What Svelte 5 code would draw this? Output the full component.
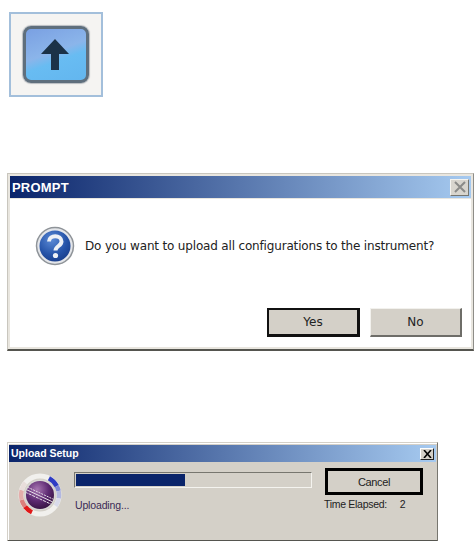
<script>
  const elapsed = 2;

  // ring segments of the spinner logo, angles clockwise from 12 o'clock
  const segments = [
    { from: 28, to: 62, color: '#2f3cc4' },
    { from: 62, to: 78, color: '#7f88d4' },
    { from: 78, to: 100, color: '#b3b8e0' },
    { from: 100, to: 125, color: '#d9dbea' },
    { from: 205, to: 232, color: '#e01818' },
    { from: 232, to: 255, color: '#dc7f7c' },
    { from: 255, to: 285, color: '#e3aeab' },
    { from: 285, to: 310, color: '#e8dedb' }
  ];

  function arc(from, to) {
    const r = 19;
    const pt = (a) => {
      const t = (a * Math.PI) / 180;
      return `${(23 + r * Math.sin(t)).toFixed(2)} ${(23 - r * Math.cos(t)).toFixed(2)}`;
    };
    return `M${pt(from)} A${r} ${r} 0 0 1 ${pt(to)}`;
  }
</script>

<div class="page">
  <div class="toolbar-shot">
    <div class="up-button">
      <svg width="30" height="32" viewBox="0 0 30 32">
        <path d="M15 0 L29 15 L19 15 L19 31 L11 31 L11 15 L1 15 Z" fill="#1b3247" />
      </svg>
    </div>
  </div>

  <div class="prompt">
    <div class="titlebar big">
      <span>PROMPT</span>
      <div class="close-soft">
        <svg width="14" height="12" viewBox="0 0 14 12">
          <path d="M2 1 L12 11 M12 1 L2 11" stroke="#8a8a88" stroke-width="2" />
        </svg>
      </div>
    </div>
    <div class="prompt-body">
      <div class="message">
        <svg class="question" width="40" height="40" viewBox="0 0 40 40">
          <defs>
            <radialGradient id="qblue" cx="0.4" cy="0.3" r="0.8">
              <stop offset="0" stop-color="#5b8ad6" />
              <stop offset="0.6" stop-color="#2553a8" />
              <stop offset="1" stop-color="#173a86" />
            </radialGradient>
          </defs>
          <circle cx="20" cy="20" r="18.5" fill="#e4e6ea" stroke="#8f9499" stroke-width="1.5" />
          <circle cx="20" cy="20" r="15.5" fill="url(#qblue)" />
          <path d="M14 15.5 C14 8.5 26.5 8.5 26.5 15.5 C26.5 20 20.5 20 20.5 24.5" fill="none" stroke="#eef1f6" stroke-width="4" />
          <circle cx="20.5" cy="29.5" r="2.6" fill="#eef1f6" />
        </svg>
        <span>Do you want to upload all configurations to the instrument?</span>
      </div>
      <div class="actions">
        <div class="btn default">Yes</div>
        <div class="btn">No</div>
      </div>
    </div>
  </div>

  <div class="upload">
    <div class="titlebar small">
      <span>Upload Setup</span>
      <div class="close-hard">
        <svg width="9" height="8" viewBox="0 0 9 8">
          <path d="M1 0 L8 8 M8 0 L1 8" stroke="#000" stroke-width="1.6" />
        </svg>
      </div>
    </div>
    <div class="upload-body">
      <svg class="logo" width="46" height="46" viewBox="0 0 46 46">
        <defs>
          <radialGradient id="orb" cx="0.4" cy="0.3" r="0.75">
            <stop offset="0" stop-color="#a877b2" />
            <stop offset="0.55" stop-color="#5d2a72" />
            <stop offset="1" stop-color="#34123f" />
          </radialGradient>
          <clipPath id="orbclip"><circle cx="23" cy="23" r="14" /></clipPath>
        </defs>
        <circle cx="23" cy="23" r="19" fill="none" stroke="#f1f0ed" stroke-width="5" />
        {#each segments as s}
          <path d={arc(s.from, s.to)} fill="none" stroke={s.color} stroke-width="4.5" />
        {/each}
        <circle cx="23" cy="23" r="15.5" fill="#d9d8d5" />
        <circle cx="23" cy="23" r="14" fill="url(#orb)" />
        <g clip-path="url(#orbclip)" stroke="#e6e0e8" stroke-width="1">
          <path d="M8 17 L38 31" />
          <path d="M8 20 L38 34" stroke-dasharray="3 1" />
          <path d="M8 14 L38 28" stroke-dasharray="2 1" />
        </g>
      </svg>
      <div class="progress-col">
        <div class="track"><div class="fill" style="width: {46.5}%"></div></div>
        <div class="status">Uploading...</div>
      </div>
      <div class="side-col">
        <div class="cancel">Cancel</div>
        <div class="elapsed"><span>Time Elapsed:</span><span>{elapsed}</span></div>
      </div>
    </div>
  </div>
</div>

<style>
  :global(body) {
    background: #fff;
  }

  .page {
    width: 475px;
    height: 541px;
    overflow: hidden;
    display: flex;
    flex-direction: column;
    font-family: "Liberation Sans", Arial, sans-serif;
    background: #fff;
  }

  .toolbar-shot {
    box-sizing: border-box;
    width: 94px;
    height: 85px;
    margin: 12px 0 0 9px;
    border: 2px solid #a3bfdb;
    background: #f5f4f2;
    display: flex;
    align-items: center;
    justify-content: center;
    flex: none;
  }

  .up-button {
    box-sizing: border-box;
    width: 66px;
    height: 57px;
    border: 3px solid #5f6f7d;
    border-radius: 8px;
    background: linear-gradient(160deg, #7aa0e2 0%, #8bb5ea 45%, #68bcf2 60%, #63b6ef 100%);
    box-shadow: 0 0 1px 1px #b9bcc0;
    display: flex;
    align-items: center;
    justify-content: center;
  }

  .up-button svg {
    margin-left: -2px;
  }

  .prompt {
    box-sizing: border-box;
    width: 467px;
    height: 178px;
    margin: 76px 0 0 7px;
    border: 1px solid #c9c6be;
    border-bottom: 2px solid #55554f;
    border-right-color: #8e8d88;
    padding: 2px;
    background: #e9e6df;
    display: flex;
    flex-direction: column;
    flex: none;
  }

  .titlebar {
    display: flex;
    align-items: center;
    justify-content: space-between;
    background: linear-gradient(90deg, #0a246a 0%, #a6caf0 100%);
    color: #fff;
    font-weight: bold;
    flex: none;
  }

  .titlebar.big {
    height: 22px;
    padding: 0 2px 0 2px;
    font-size: 13px;
    letter-spacing: 0.2px;
  }

  .titlebar.small {
    height: 17px;
    padding: 0 2px 0 2px;
    font-size: 10.5px;
  }

  .titlebar.small span {
    margin-top: -2px;
  }

  .close-soft {
    box-sizing: border-box;
    width: 19px;
    height: 17px;
    background: #d8d5ce;
    border: 1px solid #f4f3ef;
    border-right-color: #77766f;
    border-bottom-color: #77766f;
    display: flex;
    align-items: center;
    justify-content: center;
  }

  .prompt-body {
    flex: 1;
    background: #fff;
    margin-top: 1px;
    display: flex;
    flex-direction: column;
    justify-content: space-between;
  }

  .message {
    display: flex;
    align-items: center;
    gap: 10px;
    padding: 27px 0 0 25px;
    font-family: "DejaVu Sans", Verdana, sans-serif;
    font-size: 12px;
    color: #222;
    letter-spacing: -0.17px;
  }

  .question {
    flex: none;
  }

  .actions {
    display: flex;
    justify-content: flex-end;
    gap: 10px;
    padding: 0 9px 10px 0;
  }

  .btn {
    box-sizing: border-box;
    width: 92px;
    height: 29px;
    background: #d4d0c8;
    border: 1px solid #f2f1ed;
    border-right: 2px solid #6e6d68;
    border-bottom: 2px solid #6e6d68;
    font-family: "DejaVu Sans", Verdana, sans-serif;
    font-size: 12px;
    color: #222;
    display: flex;
    align-items: center;
    justify-content: center;
  }

  .btn.default {
    width: 93px;
    border: 2px solid #111;
    border-right-width: 3px;
    border-bottom-width: 3px;
  }

  .upload {
    box-sizing: border-box;
    width: 431px;
    height: 100px;
    margin: 91px 0 0 7px;
    border: 1px solid #d4d0c8;
    border-bottom: 2px solid #55554f;
    border-right-color: #77766f;
    padding: 2px 1px 0;
    background: #d4d0c8;
    box-shadow: inset 1px 1px 0 #fff;
    display: flex;
    flex-direction: column;
    flex: none;
  }

  .close-hard {
    box-sizing: border-box;
    width: 14px;
    height: 12px;
    background: #d4d0c8;
    border: 1px solid #fff;
    border-right-color: #222;
    border-bottom-color: #222;
    display: flex;
    align-items: center;
    justify-content: center;
  }

  .upload-body {
    flex: 1;
    display: flex;
    align-items: flex-start;
    font-size: 10.5px;
    color: #222;
  }

  .logo {
    flex: none;
    margin: 10px 0 0 8px;
  }

  .progress-col {
    width: 238px;
    margin: 10px 0 0 11px;
    flex: none;
  }

  .track {
    box-sizing: border-box;
    height: 16px;
    border: 1px solid #f4f3ef;
    border-top-color: #77766f;
    border-left-color: #77766f;
    padding: 1px;
  }

  .fill {
    height: 100%;
    background: #0a246a;
  }

  .status {
    margin: 11px 0 0 1px;
    color: #3a2a55;
    letter-spacing: -0.15px;
  }

  .side-col {
    margin: 6px 0 0 13px;
    width: 98px;
    flex: none;
  }

  .cancel {
    box-sizing: border-box;
    height: 27px;
    border: 3px solid #000;
    display: flex;
    align-items: center;
    justify-content: center;
    font-size: 11px;
    letter-spacing: -0.4px;
  }

  .elapsed {
    display: flex;
    gap: 13px;
    margin-top: 3px;
    margin-left: -1px;
    letter-spacing: -0.3px;
  }
</style>
